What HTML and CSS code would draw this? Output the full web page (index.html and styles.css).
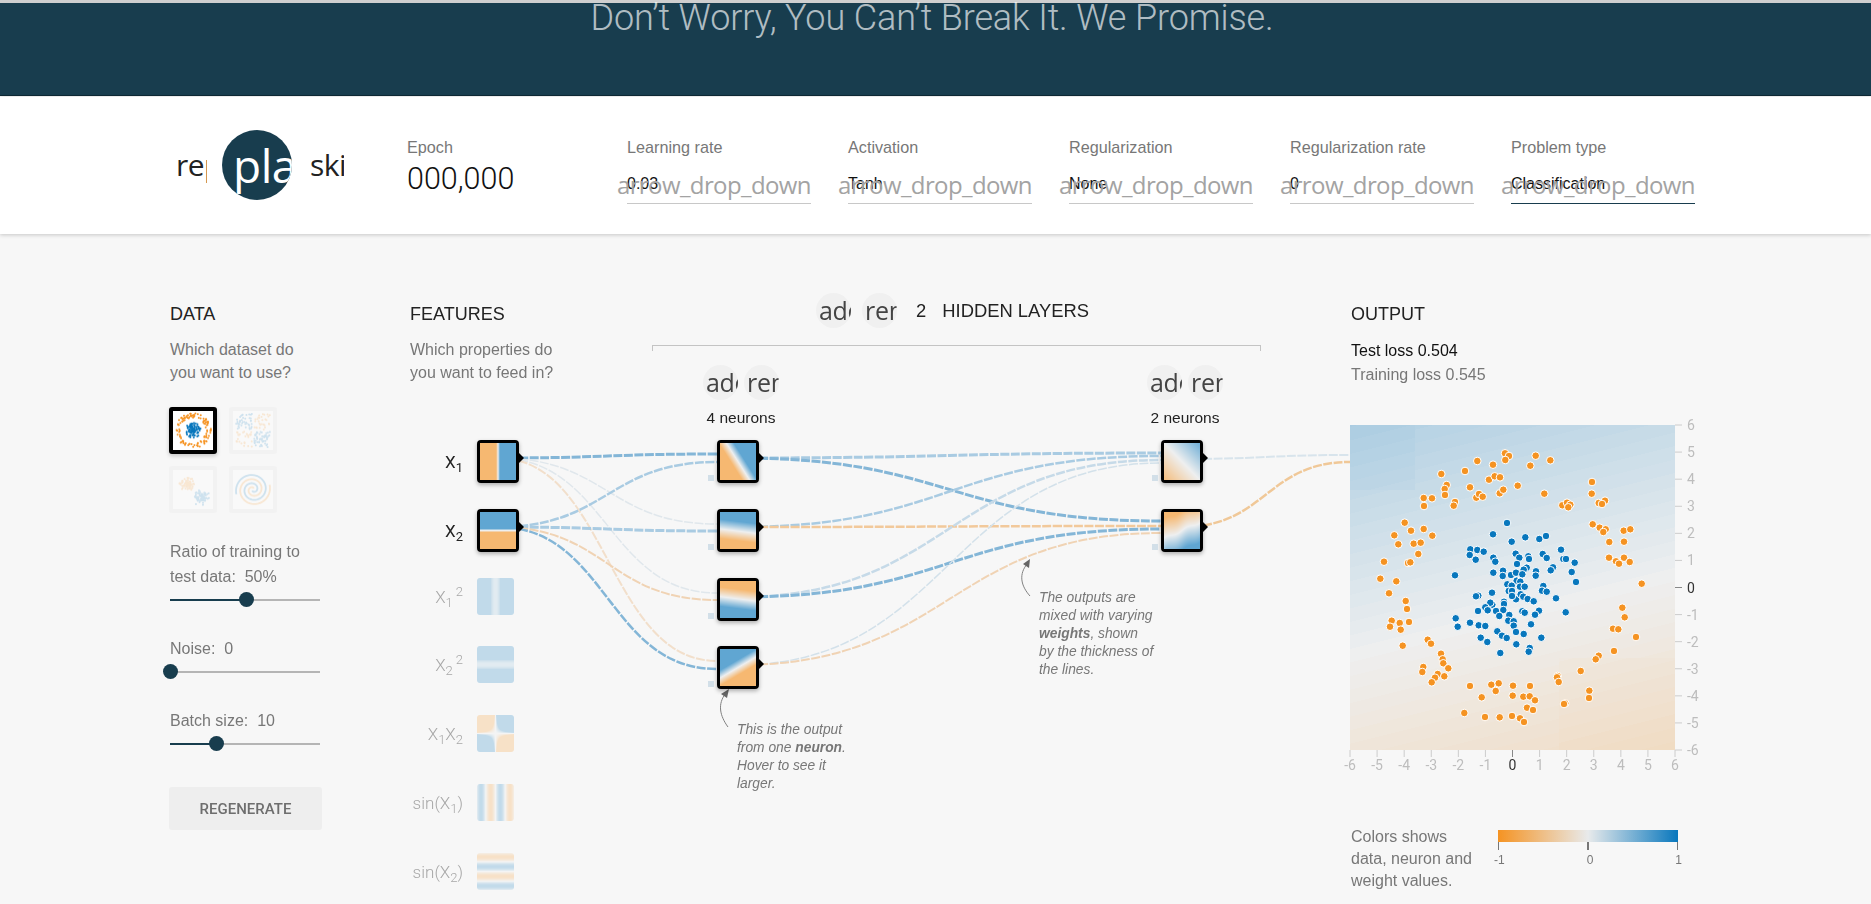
FILE: index.html
```html
<!DOCTYPE html>
<html lang="en">
<head>
<meta charset="utf-8">
<title>Playground</title>
<link rel="stylesheet" href="styles.css">
</head>
<body>
<section class="hero"><h1>Don’t Worry, You Can’t Break It. We Promise.</h1></section>

<header class="controls">
  <div class="logo-btns">
    <div class="btn-side btn-reset">replay</div>
    <div class="btn-play">play_arrow</div>
    <div class="btn-side btn-skip">skip_next</div>
  </div>
  <div class="epoch"><div class="field-label">Epoch</div><div class="epoch-value">000,000</div></div>
  <div class="fields">
    <div class="field"><div class="field-label">Learning rate</div><div class="select"><span class="select-value">0.03</span><span class="select-icon">arrow_drop_down</span></div></div>
    <div class="field"><div class="field-label">Activation</div><div class="select"><span class="select-value">Tanh</span><span class="select-icon">arrow_drop_down</span></div></div>
    <div class="field"><div class="field-label">Regularization</div><div class="select"><span class="select-value">None</span><span class="select-icon">arrow_drop_down</span></div></div>
    <div class="field"><div class="field-label">Regularization rate</div><div class="select"><span class="select-value">0</span><span class="select-icon">arrow_drop_down</span></div></div>
    <div class="field"><div class="field-label">Problem type</div><div class="select select-active"><span class="select-value">Classification</span><span class="select-icon">arrow_drop_down</span></div></div>
  </div>
</header>

<main class="main">
  <section class="col-data">
    <h2 class="section-title">DATA</h2>
    <p class="desc">Which dataset do<br>you want to use?</p>
    <div class="datasets">
      <div class="dataset dataset-on"><canvas width="40" height="40" data-set="circle"></canvas></div>
      <div class="dataset"><canvas width="40" height="40" data-set="xor"></canvas></div>
      <div class="dataset"><canvas width="40" height="40" data-set="gauss"></canvas></div>
      <div class="dataset"><canvas width="40" height="40" data-set="spiral"></canvas></div>
    </div>
    <div class="param param-ratio">Ratio of training to<br>test data:&nbsp; 50%</div>
    <div class="slider"><div class="slider-fill fill-ratio"></div><div class="slider-thumb thumb-ratio"></div></div>
    <div class="param">Noise:&nbsp; 0</div>
    <div class="slider"><div class="slider-thumb thumb-noise"></div></div>
    <div class="param">Batch size:&nbsp; 10</div>
    <div class="slider"><div class="slider-fill fill-batch"></div><div class="slider-thumb thumb-batch"></div></div>
    <button class="regen">REGENERATE</button>
  </section>

  <section class="col-net">
    <div class="net-top">
      <div class="features-head">
        <h2 class="section-title">FEATURES</h2>
        <p class="desc">Which properties do<br>you want to feed in?</p>
      </div>
      <div class="hidden-head">
        <div class="hidden-title">
          <span class="round-btn">add</span><span class="round-btn">remove</span>
          <span class="hidden-count">2</span><span class="hidden-text">HIDDEN LAYERS</span>
        </div>
        <div class="bracket"></div>
        <div class="layer-controls">
          <div class="layer-ctrl"><div class="layer-btns"><span class="round-btn">add</span><span class="round-btn">remove</span></div><div class="neuron-count">4 neurons</div></div>
          <div class="layer-ctrl"><div class="layer-btns"><span class="round-btn">add</span><span class="round-btn">remove</span></div><div class="neuron-count">2 neurons</div></div>
        </div>
      </div>
    </div>

    <div class="diagram">
      <svg id="links" class="links" viewBox="410 430 940 470" width="940" height="470"></svg>

      <div class="feature row-0"><div class="feature-label on">X<sub>1</sub></div><div class="node"><canvas width="36" height="37" data-fn="x1"></canvas></div></div>
      <div class="feature row-1"><div class="feature-label on">X<sub>2</sub></div><div class="node"><canvas width="36" height="37" data-fn="x2"></canvas></div></div>
      <div class="feature row-2"><div class="feature-label">X<sub>1</sub><sup>2</sup></div><div class="node-off"><canvas width="37" height="37" data-fn="x1s"></canvas></div></div>
      <div class="feature row-3"><div class="feature-label">X<sub>2</sub><sup>2</sup></div><div class="node-off"><canvas width="37" height="37" data-fn="x2s"></canvas></div></div>
      <div class="feature row-4"><div class="feature-label">X<sub>1</sub>X<sub>2</sub></div><div class="node-off"><canvas width="37" height="37" data-fn="xy"></canvas></div></div>
      <div class="feature row-5"><div class="feature-label">sin(X<sub>1</sub>)</div><div class="node-off"><canvas width="37" height="37" data-fn="sx"></canvas></div></div>
      <div class="feature row-6"><div class="feature-label">sin(X<sub>2</sub>)</div><div class="node-off"><canvas width="37" height="37" data-fn="sy"></canvas></div></div>

      <div class="node neuron h1 row-0"><canvas width="36" height="37" data-fn="a1"></canvas><i class="bias"></i></div>
      <div class="node neuron h1 row-1"><canvas width="36" height="37" data-fn="a2"></canvas><i class="bias"></i></div>
      <div class="node neuron h1 row-2"><canvas width="36" height="37" data-fn="a3"></canvas><i class="bias"></i></div>
      <div class="node neuron h1 row-3"><canvas width="36" height="37" data-fn="a4"></canvas><i class="bias"></i></div>
      <div class="node neuron h2 row-0"><canvas width="36" height="37" data-fn="b1"></canvas><i class="bias"></i></div>
      <div class="node neuron h2 row-1"><canvas width="36" height="37" data-fn="b2"></canvas><i class="bias"></i></div>

      <p class="note note-neuron">This is the output<br>from one <b>neuron</b>.<br>Hover to see it<br>larger.</p>
      <p class="note note-weights">The outputs are<br>mixed with varying<br><b>weights</b>, shown<br>by the thickness of<br>the lines.</p>
    </div>
  </section>

  <section class="col-output">
    <h2 class="section-title">OUTPUT</h2>
    <div class="loss loss-test">Test loss <span class="num">0.504</span></div>
    <div class="loss loss-train">Training loss <span class="num">0.545</span></div>
    <div class="plot">
      <canvas id="heat" width="325" height="325"></canvas>
      <svg id="plot-svg" class="plot-svg" viewBox="0 0 360 350" width="360" height="350"></svg>
    </div>
    <div class="legend">
      <div class="legend-text">Colors shows<br>data, neuron and<br>weight values.</div>
      <div class="scale">
        <div class="scale-bar"></div>
        <div class="scale-ticks"><i></i><i class="mid"></i><i></i></div>
        <div class="scale-labels"><span>-1</span><span>0</span><span>1</span></div>
      </div>
    </div>
  </section>
</main>
<script src="script.js"></script>
</body>
</html>
```
FILE: styles.css
```css
* { box-sizing: border-box; }
html, body { margin: 0; padding: 0; height: 904px; overflow: hidden; }
body { background: #f7f7f7; font-family: "Liberation Sans", Arial, sans-serif; color: #777; }

.hero { height: 96px; background: #183d4e; border-top: 3px solid #cfcfcf; border-bottom: 1px solid #0e2935; text-align: center; padding-right: 7px; }
.hero h1 { margin: 0; font: 300 36px/30px Roboto, sans-serif; letter-spacing: -.13px; color: rgba(255,255,255,.68); }

.controls { margin-top: 1px; height: 137px; background: #fff; box-shadow: 0 1px 4px rgba(0,0,0,.2); display: flex; padding: 41px 0 0 176px; position: relative; }
.logo-btns { display: flex; align-items: center; height: 70px; margin-top: -8px; }
.btn-side { font: 30px/42px "Open Sans", sans-serif; letter-spacing: -.5px; color: #222; overflow: hidden; height: 42px; white-space: nowrap; }
.btn-reset { width: 31px; }
.btn-skip { width: 34px; }
.btn-play { width: 70px; height: 70px; margin: 0 18px 0 15px; border-radius: 50%; background: #183d4e; color: #fff; font: 46px/70px "Open Sans", sans-serif; letter-spacing: -.5px; overflow: hidden; padding-left: 11px; white-space: nowrap; }
.epoch { width: 220px; margin-left: 63px; }
.field-label { font-size: 16.2px; line-height: 18px; color: #777; white-space: nowrap; }
.epoch-value { font: 300 30.5px/36px Roboto, sans-serif; color: #111; margin-top: 5px; }
.fields { display: flex; gap: 37px; }
.field { width: 184px; }
.select { position: relative; height: 48px; border-bottom: 1px solid #c8c8c8; padding-top: 18px; font-size: 16px; line-height: 20px; color: #111; }
.select-active { border-bottom-color: #183d4e; }
.select-icon { position: absolute; right: 0; top: 13px; font: 24px/32px "Open Sans", sans-serif; letter-spacing: -.6px; color: #a3a3a3; white-space: nowrap; }

.main { display: grid; grid-template-columns: 240px 940px 1fr; padding: 69px 0 0 170px; height: 668px; }
.section-title { margin: 0; font-size: 18px; line-height: 22px; font-weight: 400; color: #222; }
.desc { margin: 13px 0 0; font-size: 16px; line-height: 23px; color: #777; }

.datasets { display: grid; grid-template-columns: 48px 48px; gap: 12px; margin: 23px 0 0 -1px; }
.dataset { width: 48px; height: 47px; border: 4px solid #f2f2f2; border-radius: 3px; background: #f9f9f9; }
.dataset canvas { display: block; width: 40px; height: 39px; opacity: .18; }
.dataset-on { border-color: #000; background: #fff; box-shadow: 0 2px 4px rgba(0,0,0,.2); }
.dataset-on canvas { opacity: 1; }

.param { margin-top: 24px; margin-bottom: -1px; font-size: 16px; line-height: 25px; color: #777; white-space: nowrap; }
.param-ratio { margin-top: 26px; }
.slider { position: relative; width: 150px; height: 24px; background: linear-gradient(#b5b5b5,#b5b5b5) center / 100% 2px no-repeat; }
.slider-fill { position: absolute; left: 0; top: 11px; height: 2px; background: #183d4e; }
.fill-ratio { width: 76px; }
.fill-batch { width: 46px; }
.slider-thumb { position: absolute; top: 4px; width: 15px; height: 15px; margin-left: -7.5px; border-radius: 50%; background: #183d4e; }
.thumb-ratio { left: 76px; }
.thumb-noise { left: 0; }
.thumb-batch { left: 46px; }
.regen { display: block; width: 153px; height: 43px; margin: 31px 0 0 -1px; border: 0; border-radius: 3px; background: #eee; color: #6e6e6e; font: 500 15px Roboto, sans-serif; }

.col-net { position: relative; }
.net-top { display: flex; height: 126px; }
.features-head { width: 242px; }
.hidden-head { width: 609px; }
.hidden-title { display: flex; align-items: center; height: 35px; margin-top: -10px; padding-left: 164px; }
.round-btn { display: block; width: 35px; height: 35px; border-radius: 50%; background: #f0f0f0; color: #444; font: 25px/35px "Open Sans", sans-serif; letter-spacing: -.3px; overflow: hidden; padding-left: 3px; white-space: nowrap; }
.hidden-title .round-btn + .round-btn { margin-left: 11px; }
.hidden-count { margin-left: 19px; font-size: 18.4px; line-height: 22px; color: #222; }
.hidden-text { margin-left: 16px; font-size: 18.4px; line-height: 22px; color: #222; }
.bracket { height: 6px; margin-top: 17px; border: 1px solid #c4c4c4; border-bottom: 0; }
.layer-controls { display: flex; gap: 368px; padding-left: 51px; margin-top: 14px; }
.layer-ctrl { width: 76px; }
.layer-btns { display: flex; gap: 6px; }
.neuron-count { margin-top: 9px; font-size: 15.5px; line-height: 18px; color: #222; text-align: center; white-space: nowrap; }

.diagram { position: absolute; left: 0; top: 126px; width: 940px; height: 470px; }
.links { position: absolute; left: 0; top: 0; }
.links .ln { fill: none; stroke-dasharray: 9 1.5; }
.links .arr { fill: none; stroke: #808080; stroke-width: 1; }
.links .head { fill: #666; }

.feature { position: absolute; left: 0; display: flex; align-items: center; gap: 14px; }
.feature-label { width: 53px; text-align: right; font: 300 17px/22px Roboto, sans-serif; color: #a8a8a8; white-space: nowrap; }
.feature-label.on { color: #222; font-weight: 400; }
.feature-label sub { font-size: 13px; line-height: 0; }
.feature-label sup { font-size: 13px; line-height: 0; margin-left: 3px; }
.node { position: relative; width: 42px; height: 43px; border: 3px solid #000; border-radius: 4px; box-shadow: 0 2px 4px rgba(0,0,0,.3); background: #fff; }
.node canvas { display: block; width: 36px; height: 37px; }
.node::after { content: ""; position: absolute; left: 39px; top: 10px; border: 5px solid transparent; border-left: 5px solid #000; border-right: 0; }
.node-off { width: 37px; height: 37px; border-radius: 3px; overflow: hidden; }
.node-off canvas { display: block; width: 37px; height: 37px; opacity: .36; }
.neuron { position: absolute; }
.h1 { left: 307px; }
.h2 { left: 751px; }
.row-0 { top: 11px; }
.row-1 { top: 80px; }
.row-2 { top: 149px; }
.row-3 { top: 217px; }
.row-4 { top: 286px; }
.row-5 { top: 355px; }
.row-6 { top: 424px; }
.bias { position: absolute; left: -12px; top: 32px; width: 6px; height: 6px; background: #d2dfe8; }
.note { position: absolute; margin: 0; font-size: 13.8px; line-height: 18px; font-style: italic; color: #777; white-space: nowrap; }
.note-neuron { left: 327px; top: 292px; }
.note-weights { left: 629px; top: 160px; }

.col-output { margin-left: 1px; }
.loss { font-size: 16px; line-height: 24px; color: #111; white-space: nowrap; }
.loss-test { margin-top: 14px; }
.loss-train { color: #777; }
.plot { position: relative; width: 325px; height: 325px; margin: 38px 0 0 -1px; }
.plot canvas { display: block; }
.plot-svg { position: absolute; left: 0; top: 0; overflow: visible; }
.plot-svg text { font: 14px Roboto, sans-serif; fill: #bdbdbd; }
.plot-svg text.zero { fill: #333; }
.legend { display: flex; margin-top: 76px; }
.legend-text { width: 147px; font-size: 16px; line-height: 22px; color: #777; white-space: nowrap; }
.scale { width: 180px; padding-top: 4px; }
.scale-bar { height: 12px; background: linear-gradient(90deg,#f59322,#e8eaeb 50%,#0877bd); }
.scale-ticks { display: flex; justify-content: space-between; height: 8px; }
.scale-ticks i { width: 1px; background: #777; }
.scale-ticks i.mid { width: 2px; }
.scale-labels { display: flex; justify-content: space-between; margin: 2px -4px 0; font-size: 12px; line-height: 16px; color: #777; }
```
FILE: script.js
```js
(function () {
  var BG = [247, 247, 247];
  function scale(v) {
    v = Math.max(-1, Math.min(1, v));
    var a = [232, 234, 235], b = v > 0 ? [8, 119, 189] : [245, 147, 34], t = Math.abs(v);
    return [0, 1, 2].map(function (i) { return a[i] + (b[i] - a[i]) * t; });
  }
  function blend(c, alpha, bg) {
    return [0, 1, 2].map(function (i) { return c[i] * alpha + bg[i] * (1 - alpha); });
  }
  function clamp(v) { return Math.max(-1, Math.min(1, v)); }
  var fns = {
    x1: function (x) { return clamp(x * 1.6); },
    x2: function (x, y) { return clamp(y * 1.6); },
    x1s: function (x) { return clamp(x * x * .25 + .35); },
    x2s: function (x, y) { return clamp(y * y * .25 + .35); },
    xy: function (x, y) { return clamp(x * y * .5); },
    sx: function (x) { return Math.sin(x); },
    sy: function (x, y) { return Math.sin(y); },
    a1: function (x, y) { return clamp(.4 * (x + .65 * y)); },
    a2: function (x, y) { return clamp(.32 * (y + .12 * x + .2)); },
    a3: function (x, y) { return clamp(-.32 * (y + .12 * x - .2)); },
    a4: function (x, y) { return clamp(.4 * (y - .57 * x)); },
    b1: function (x, y) { return clamp(.075 * (x + y)); },
    b2: function (x, y) { return clamp(.16 * (.45 * x - y) + .06 * Math.sin(x * .9)); }
  };
  document.querySelectorAll('canvas[data-fn]').forEach(function (cv) {
    var f = fns[cv.dataset.fn], w = cv.width, h = cv.height, ctx = cv.getContext('2d');
    var im = ctx.createImageData(w, h);
    for (var j = 0; j < h; j++) for (var i = 0; i < w; i++) {
      var x = (i + .5) / w * 12 - 6, y = 6 - (j + .5) / h * 12;
      var c = blend(scale(f(x, y)), .63, [247, 247, 247]), k = (j * w + i) * 4;
      im.data[k] = c[0]; im.data[k + 1] = c[1]; im.data[k + 2] = c[2]; im.data[k + 3] = 255;
    }
    ctx.putImageData(im, 0, 0);
  });

  /* output heat map */
  (function () {
    var cv = document.getElementById('heat'), ctx = cv.getContext('2d'), n = cv.width;
    var im = ctx.createImageData(n, n);
    for (var j = 0; j < n; j++) for (var i = 0; i < n; i++) {
      var x = i / n * 12 - 6, y = 6 - j / n * 12;
      var v = .05 - .0125 * x + .05 * y;
      if (x < -3.6 && y > 3.6) v += .04;
      if (x > 1.7 && y < -2.6) v -= .03;
      v = Math.round(v * 40) / 40;
      var c = blend(scale(v), .63, BG), k = (j * n + i) * 4;
      im.data[k] = c[0]; im.data[k + 1] = c[1]; im.data[k + 2] = c[2]; im.data[k + 3] = 255;
    }
    ctx.putImageData(im, 0, 0);
  })();

  /* dataset thumbnails */
  var seed = 7;
  function rnd() { seed = (seed * 16807) % 2147483647; return seed / 2147483647; }
  function gauss() { return (rnd() + rnd() + rnd() - 1.5) / 1.5; }
  document.querySelectorAll('canvas[data-set]').forEach(function (cv) {
    var ctx = cv.getContext('2d'), kind = cv.dataset.set, O = '#f59322', B = '#0877bd';
    function dot(x, y, c) { ctx.fillStyle = c; ctx.beginPath(); ctx.arc(x, y, 1, 0, 6.3); ctx.fill(); }
    var i, a, r;
    if (kind === 'circle') {
      for (i = 0; i < 110; i++) { a = rnd() * 6.283; r = 13 + rnd() * 5; dot(20 + r * Math.cos(a), 20 + r * Math.sin(a), O); }
      for (i = 0; i < 110; i++) { a = rnd() * 6.283; r = rnd() * 8; dot(20 + r * Math.cos(a), 20 + r * Math.sin(a), B); }
    } else if (kind === 'xor') {
      for (i = 0; i < 170; i++) {
        var x = 3 + rnd() * 34, y = 3 + rnd() * 34;
        if (Math.abs(x - 20) < 1 || Math.abs(y - 20) < 1) continue;
        dot(x, y, (x - 20) * (y - 20) > 0 ? B : O);
      }
    } else if (kind === 'gauss') {
      for (i = 0; i < 70; i++) { dot(15 + gauss() * 10, 14 + gauss() * 9, O); dot(28 + gauss() * 10, 28 + gauss() * 9, B); }
    } else {
      ctx.lineWidth = 1.8;
      [[O, 0], [B, Math.PI]].forEach(function (s) {
        ctx.strokeStyle = s[0]; ctx.beginPath();
        for (var t = 1; t < 13; t += .15) {
          var R = 1.35 * t, ang = t + s[1];
          ctx.lineTo(20 + R * Math.cos(ang), 20 - R * Math.sin(ang));
        }
        ctx.stroke();
      });
    }
  });

  /* network links: x0, y0, x1, y1, colour, width */
  var BT = '#84b6d7', BM = '#a9cbe2', BL = '#c6dae8', PL = '#e0e7ec', OM = '#f0d3b4', OL = '#f2dfcb';
  var L = [
    [498, 459, 717, 455, BT, 3], [498, 459, 717, 525, PL, 1.5], [498, 459, 717, 594, PL, 1.5], [498, 459, 717, 662, OL, 2],
    [498, 528, 717, 463, BM, 2.5], [498, 528, 717, 532, BM, 3], [498, 528, 717, 601, OM, 2], [498, 528, 717, 670, BT, 2.5],
    [738, 459, 1161, 454, BM, 3], [738, 459, 1161, 522, BT, 3],
    [738, 528, 1161, 457, BM, 2.5], [738, 528, 1161, 527, '#f2c99b', 2.5],
    [738, 598, 1161, 461, BL, 2.5], [738, 598, 1161, 530, BT, 3],
    [738, 666, 1161, 464, '#d3e1ea', 1.5], [738, 666, 1161, 534, OM, 2],
    [1182, 460, 1350, 456, '#d8e4ec', 2], [1182, 528, 1350, 463, '#f0c898', 2.5]
  ];
  var NS = 'http://www.w3.org/2000/svg', svg = document.getElementById('links');
  function el(parent, name, attrs) {
    var e = document.createElementNS(NS, name);
    for (var k in attrs) e.setAttribute(k, attrs[k]);
    parent.appendChild(e); return e;
  }
  L.forEach(function (l) {
    var m = (l[0] + l[2]) / 2;
    el(svg, 'path', { 'class': 'ln', d: 'M' + l[0] + ' ' + l[1] + 'C' + m + ' ' + l[1] + ' ' + m + ' ' + l[3] + ' ' + l[2] + ' ' + l[3], stroke: l[4], 'stroke-width': l[5] });
  });
  el(svg, 'path', { 'class': 'arr', d: 'M728 728C720 717 717 705 726 694' });
  el(svg, 'path', { 'class': 'head', d: 'M729 690L721 695L727 699Z' });
  el(svg, 'path', { 'class': 'arr', d: 'M1030 597C1021 587 1018 575 1028 564' });
  el(svg, 'path', { 'class': 'head', d: 'M1030 560L1023 565L1029 569Z' });

  /* plot points in 3x crop coordinates */
  var O = [[525,130],[537,138],[526,150],[617,137],[601,167],[661,151],[442,153],[489,164],[405,183],[334,192],[477,209],[494,199],[510,202],[420,232],[350,225],[344,237],[345,255],[281,264],[306,265],[282,288],[375,276],[371,287],[439,263],[447,252],[458,260],[509,250],[520,239],[563,227],[643,251],[786,216],[785,251],[806,279],[825,272],[816,282],[697,286],[711,278],[721,284],[715,292],[788,343],[809,353],[827,358],[820,366],[881,362],[901,358],[838,396],[882,395],[837,443],[882,443],[858,454],[867,461],[899,456],[935,521],[224,338],[243,362],[281,357],[193,376],[307,377],[205,403],[251,401],[272,398],[265,432],[162,455],[234,459],[241,457],[151,506],[199,514],[177,550],[227,573],[231,597],[209,639],[185,632],[180,650],[237,636],[212,659],[218,707],[293,689],[303,701],[333,731],[338,748],[340,760],[355,775],[280,771],[277,786],[323,792],[343,799],[315,803],[305,817],[420,828],[484,824],[506,820],[497,843],[549,827],[600,828],[455,862],[548,857],[580,860],[599,859],[615,871],[591,893],[609,900],[403,909],[465,921],[509,922],[546,918],[570,925],[582,936],[877,593],[884,622],[849,656],[865,658],[918,681],[852,723],[806,737],[797,748],[752,783],[683,798],[681,802],[686,816],[778,842],[777,864],[706,880],[702,882]];
  var B = [[531,339],[489,373],[586,382],[628,387],[648,378],[545,395],[421,418],[442,420],[419,435],[437,449],[461,425],[490,443],[496,455],[557,431],[568,443],[595,439],[597,447],[638,432],[650,444],[693,419],[700,447],[708,447],[734,458],[561,462],[669,472],[662,481],[725,486],[590,473],[581,479],[618,484],[617,497],[490,488],[519,482],[518,498],[543,495],[558,488],[577,493],[375,496],[738,516],[532,523],[560,512],[571,515],[545,527],[570,530],[584,530],[536,543],[546,543],[640,528],[636,542],[650,545],[558,568],[572,553],[546,558],[486,548],[580,560],[593,567],[611,574],[678,565],[445,557],[438,559],[522,575],[522,582],[487,584],[481,578],[466,592],[473,601],[444,603],[498,603],[520,600],[538,615],[508,618],[577,604],[584,608],[627,602],[615,614],[707,607],[377,625],[383,650],[420,638],[446,646],[466,648],[535,632],[551,634],[551,647],[603,643],[502,664],[516,677],[530,684],[558,666],[581,672],[452,683],[472,696],[634,683],[559,703],[599,714],[596,725],[511,729]];
  var ps = document.getElementById('plot-svg');
  function pts(list, col) {
    list.forEach(function (p) {
      el(ps, 'circle', { cx: ((p[0] - 60) / 3).toFixed(1), cy: ((p[1] - 45) / 3).toFixed(1), r: 3.8, fill: col, stroke: '#fff', 'stroke-width': 1 });
    });
  }
  pts(O, '#f59322'); pts(B, '#0877bd');

  /* axes */
  var u = 325 / 12;
  for (var t = -6; t <= 6; t++) {
    var p = (t + 6) * u, z = t === 0, tc = z ? '#888' : '#ccc';
    el(ps, 'line', { x1: p, x2: p, y1: 325, y2: 332, stroke: tc });
    el(ps, 'line', { x1: 325, x2: 332, y1: 325 - p, y2: 325 - p, stroke: tc });
    var a = el(ps, 'text', { x: p, y: 345, 'text-anchor': 'middle', 'class': z ? 'zero' : '' });
    a.textContent = t;
    var b = el(ps, 'text', { x: 337, y: 330 - p, 'class': z ? 'zero' : '' });
    b.textContent = t;
  }
})();
```
